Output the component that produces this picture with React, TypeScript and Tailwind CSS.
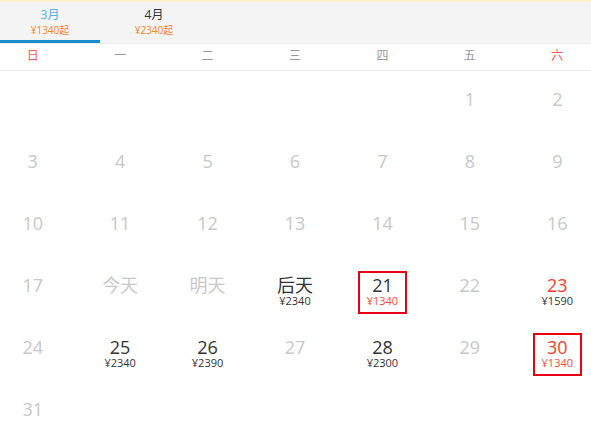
import { ReactNode } from "react";

type Day = {
  label: string;
  tone?: "muted" | "dark" | "red";
  price?: string;
  priceRed?: boolean;
  selected?: boolean;
};

const weekDays = ["日", "一", "二", "三", "四", "五", "六"];

const tabs = [
  { month: "3月", price: "¥1340起", active: true },
  { month: "4月", price: "¥2340起", active: false },
];

// March: the 1st falls on Friday
const days: (Day | null)[] = [
  null, null, null, null, null,
  { label: "1" }, { label: "2" },
  { label: "3" }, { label: "4" }, { label: "5" }, { label: "6" }, { label: "7" }, { label: "8" }, { label: "9" },
  { label: "10" }, { label: "11" }, { label: "12" }, { label: "13" }, { label: "14" }, { label: "15" }, { label: "16" },
  { label: "17" },
  { label: "今天" },
  { label: "明天" },
  { label: "后天", tone: "dark", price: "¥2340" },
  { label: "21", tone: "dark", price: "¥1340", priceRed: true, selected: true },
  { label: "22" },
  { label: "23", tone: "red", price: "¥1590" },
  { label: "24" },
  { label: "25", tone: "dark", price: "¥2340" },
  { label: "26", tone: "dark", price: "¥2390" },
  { label: "27" },
  { label: "28", tone: "dark", price: "¥2300" },
  { label: "29" },
  { label: "30", tone: "red", price: "¥1340", priceRed: true, selected: true },
  { label: "31" },
];

const Cell = ({ day }: { day: Day | null }) => {
  if (!day) return <div className="h-[62px]" />;

  let color = "text-[#c8c8c8]";
  if (day.tone === "dark") color = "text-[#333]";
  if (day.tone === "red") color = "text-[#ff3b30]";

  let content: ReactNode = (
    <>
      <div className={`text-[18px] leading-[19px] ${color}`}>{day.label}</div>
      {day.price && (
        <div className={`text-[11px] leading-[11px] ${day.priceRed ? "text-[#ff4a3d]" : "text-[#333]"}`}>
          {day.price}
        </div>
      )}
    </>
  );

  return (
    <div className="h-[62px] flex justify-center">
      <div
        className={`mt-[14px] w-[49px] h-[43px] pt-[3px] flex flex-col items-center border-2 ${
          day.selected ? "border-[#e60012]" : "border-transparent"
        }`}
      >
        {content}
      </div>
    </div>
  );
};

export default function App() {
  return (
    <div className="w-[591px] h-[428px] overflow-hidden bg-white font-['Open_Sans','Noto_Sans_CJK_SC',sans-serif]">
      <div className="h-[2px] bg-[#fdf0cf]" />
      <div className="h-[42px] bg-[#f4f4f4] flex gap-[4px] border-b border-[#ececec]">
        {tabs.map((tab) => (
          <div
            key={tab.month}
            className={`w-[100px] flex flex-col items-center pt-[5px] border-b-[3px] ${
              tab.active ? "border-[#1a8ccb]" : "border-transparent"
            }`}
          >
            <div className={`text-[12px] leading-[16px] ${tab.active ? "text-[#4db3ea]" : "text-[#333]"}`}>
              {tab.month}
            </div>
            <div className="text-[10px] leading-[14px] text-[#f5821f]">{tab.price}</div>
          </div>
        ))}
      </div>
      <div className="w-[612px] ml-[-11px]">
        <div className="grid grid-cols-7 h-[27px] pb-[3px] items-center border-b border-[#ededed]">
          {weekDays.map((w, i) => (
            <div
              key={w}
              className={`text-center text-[12px] leading-[14px] ${
                i === 0 || i === 6 ? "text-[#ff5a5a]" : "text-[#999]"
              }`}
            >
              {w}
            </div>
          ))}
        </div>
        <div className="grid grid-cols-7">
          {days.map((d, i) => (
            <Cell key={i} day={d} />
          ))}
        </div>
      </div>
    </div>
  );
}
